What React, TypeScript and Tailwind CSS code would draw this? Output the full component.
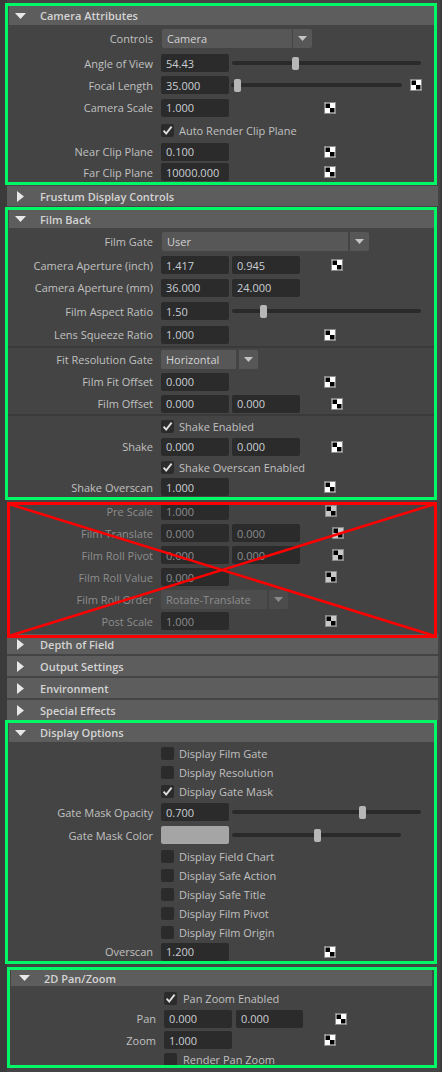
import React from "react";

type Kids = { children?: React.ReactNode };

function Header({
  title,
  open,
  cls,
  tri,
}: {
  title: string;
  open?: boolean;
  cls: string;
  tri: string;
}) {
  return (
    <div className={`flex items-center bg-[#5d5d5d] shrink-0 ${cls}`}>
      <div className={`shrink-0 flex items-center ${tri}`}>
        {open ? (
          <svg width="11" height="6" viewBox="0 0 11 6">
            <polygon points="0,0 11,0 5.5,6" fill="#e8e8e8" />
          </svg>
        ) : (
          <svg width="7" height="11" viewBox="0 0 7 11">
            <polygon points="0,0 7,5.5 0,11" fill="#e8e8e8" />
          </svg>
        )}
      </div>
      <span className="font-semibold text-[11px] text-[#d4d4d4] whitespace-nowrap">{title}</span>
    </div>
  );
}

function Row({
  h,
  label = "",
  lw = "w-[145px]",
  dim,
  extra = "items-center",
  children,
}: Kids & { h: string; label?: string; lw?: string; dim?: boolean; extra?: string }) {
  return (
    <div className={`flex shrink-0 ${extra} ${h}`}>
      <div
        className={`${lw} shrink-0 text-right whitespace-nowrap ${dim ? "text-[#8d8d8d]" : "text-[#c0c0c0]"}`}
      >
        {label}
      </div>
      <div className="ml-[8px] flex items-center">{children}</div>
    </div>
  );
}

function Field({ v, w = "w-[68px]", dim, cls = "" }: { v: string; w?: string; dim?: boolean; cls?: string }) {
  return (
    <div
      className={`${w} h-[18px] shrink-0 rounded-[2px] bg-[#2b2b2b] pl-[5px] flex items-center whitespace-nowrap ${
        dim ? "text-[#8a8c8e]" : "text-[#c9ced4]"
      } ${cls}`}
    >
      {v}
    </div>
  );
}

function Slider({ w, thumb, cls = "" }: { w: string; thumb: number; cls?: string }) {
  return (
    <div className={`relative h-[13px] flex items-center shrink-0 ${w} ${cls}`}>
      <div className="h-[4px] w-full rounded-full bg-[#2a2a2a]" />
      <div className="absolute top-0 h-[13px] w-[7px] rounded-[2px] bg-[#b7b7b7]" style={{ left: thumb }} />
    </div>
  );
}

function Checker({ cls = "", dim }: { cls?: string; dim?: boolean }) {
  return (
    <svg width="12" height="12" viewBox="0 0 12 12" className={`shrink-0 ${cls}`}>
      <rect x="0.5" y="0.5" width="11" height="11" fill={dim ? "#c8c8c8" : "#ffffff"} stroke="#8a8a8a" />
      <rect x="1.5" y="1.5" width="4.5" height="4.5" fill="#000" />
      <rect x="6" y="6" width="4.5" height="4.5" fill="#000" />
    </svg>
  );
}

function Check({ checked, label, gap = "ml-[5px]" }: { checked?: boolean; label: string; gap?: string }) {
  return (
    <div className="flex items-center">
      <div className="w-[13px] h-[13px] shrink-0 rounded-[2px] bg-[#2b2b2b] flex items-center justify-center">
        {checked && (
          <svg width="11" height="11" viewBox="0 0 11 11">
            <path d="M1.6 5.6 L4.2 8.6 L9.6 1.6" stroke="#dedede" strokeWidth="1.9" fill="none" />
          </svg>
        )}
      </div>
      <span className={`${gap} text-[#c0c0c0] whitespace-nowrap`}>{label}</span>
    </div>
  );
}

function Drop({ v, w, gap = "ml-[1px]", cls = "", dim }: { v: string; w: string; gap?: string; cls?: string; dim?: boolean }) {
  return (
    <div className={`flex items-center h-[19px] ${cls}`}>
      <div
        className={`${w} h-full rounded-l-[2px] pl-[5px] flex items-center whitespace-nowrap ${
          dim ? "bg-[#4c4c4c] text-[#8d8d8d]" : "bg-[#575757] text-[#d2d2d2]"
        }`}
      >
        {v}
      </div>
      <div
        className={`${gap} w-[19px] h-full rounded-r-[2px] flex items-center justify-center ${
          dim ? "bg-[#4c4c4c]" : "bg-[#575757]"
        }`}
      >
        <svg width="9" height="5" viewBox="0 0 9 5">
          <polygon points="0,0 9,0 4.5,5" fill={dim ? "#8a8a8a" : "#c4c4c4"} />
        </svg>
      </div>
    </div>
  );
}

function Sep() {
  return <div className="h-[2px] shrink-0 bg-[#3a3a3a]" />;
}

export default function App() {
  return (
    <div className="w-[442px] h-[1072px] bg-[#3b3b3b] overflow-hidden font-['Open_Sans',sans-serif] text-[11px] leading-none">
      <div className="ml-[7px] w-[433px] h-full bg-[#444444] flex flex-col pt-[3px]">
        {/* Camera Attributes */}
        <div className="-ml-[2px] w-[432px] border-[3px] border-[#00f766] flex flex-col shrink-0">
          <Header title="Camera Attributes" open cls="h-[19px] ml-[1px]" tri="w-[31px] pl-[6px]" />
          <Row h="h-[27px]" label="Controls">
            <Drop v="Camera" w="w-[130px]" cls="ml-[1px]" />
          </Row>
          <Row h="h-[22px]" label="Angle of View">
            <Field v="54.43" />
            <Slider w="w-[189px]" thumb={60} cls="ml-[3px]" />
          </Row>
          <Row h="h-[22px]" label="Focal Length">
            <Field v="35.000" />
            <Slider w="w-[171px]" thumb={3} cls="ml-[2px]" />
            <Checker cls="ml-[8px]" />
          </Row>
          <Row h="h-[23px]" label="Camera Scale">
            <Field v="1.000" />
            <Checker cls="ml-[95px]" />
          </Row>
          <Row h="h-[22px]">
            <Check checked label="Auto Render Clip Plane" />
          </Row>
          <Row h="h-[21px]" label="Near Clip Plane">
            <Field v="0.100" />
            <Checker cls="ml-[95px]" />
          </Row>
          <Row h="h-[20px]" label="Far Clip Plane">
            <Field v="10000.000" />
            <Checker cls="ml-[95px]" />
          </Row>
        </div>

        <Header title="Frustum Display Controls" cls="h-[20px] w-[431px] mt-[1px]" tri="w-[33px] pl-[10px]" />

        {/* Film Back */}
        <div className="-ml-[2px] mt-[1px] w-[432px] border-[3px] border-[#00f766] flex flex-col shrink-0">
          <Header title="Film Back" open cls="h-[18px] ml-[1px]" tri="w-[31px] pl-[6px]" />
          <Row h="h-[26px]" label="Film Gate">
            <Drop v="User" w="w-[186px]" gap="ml-[2px]" cls="ml-[1px]" />
          </Row>
          <Row h="h-[22px]" label="Camera Aperture (inch)">
            <Field v="1.417" />
            <Field v="0.945" cls="ml-[3px]" />
            <Checker cls="ml-[31px]" />
          </Row>
          <Row h="h-[23px]" label="Camera Aperture (mm)">
            <Field v="36.000" />
            <Field v="24.000" cls="ml-[3px]" />
          </Row>
          <Row h="h-[24px]" label="Film Aspect Ratio">
            <Field v="1.50" />
            <Slider w="w-[189px]" thumb={28} cls="ml-[3px]" />
          </Row>
          <Row h="h-[23px]" label="Lens Squeeze Ratio">
            <Field v="1.000" />
            <Checker cls="ml-[95px]" />
          </Row>
          <Sep />
          <Row h="h-[22px]" label="Fit Resolution Gate">
            <Drop v="Horizontal" w="w-[75px]" gap="ml-[3px]" />
          </Row>
          <Row h="h-[23px]" label="Film Fit Offset">
            <Field v="0.000" />
            <Checker cls="ml-[95px]" />
          </Row>
          <Row h="h-[21px]" label="Film Offset">
            <Field v="0.000" />
            <Field v="0.000" cls="ml-[3px]" />
            <Checker cls="ml-[31px]" />
          </Row>
          <Sep />
          <Row h="h-[20px]">
            <Check checked label="Shake Enabled" />
          </Row>
          <Row h="h-[21px]" label="Shake">
            <Field v="0.000" />
            <Field v="0.000" cls="ml-[3px]" />
            <Checker cls="ml-[31px]" />
          </Row>
          <Row h="h-[20px]">
            <Check checked label="Shake Overscan Enabled" />
          </Row>
          <Row h="h-[20px]" label="Shake Overscan">
            <Field v="1.000" />
            <Checker cls="ml-[95px]" />
          </Row>
        </div>

        {/* Disabled rows crossed out */}
        <div className="relative w-[430px] flex flex-col shrink-0 pb-[2px] bg-[#434343]">
          <Row h="h-[22px]" label="Pre Scale" lw="w-[146px]" dim>
            <Field v="1.000" dim />
            <Checker cls="ml-[96px]" dim />
          </Row>
          <Row h="h-[22px]" label="Film Translate" lw="w-[146px]" dim>
            <Field v="0.000" dim />
            <Field v="0.000" dim cls="ml-[3px]" />
            <Checker cls="ml-[32px]" dim />
          </Row>
          <Row h="h-[22px]" label="Film Roll Pivot" lw="w-[146px]" dim>
            <Field v="0.000" dim />
            <Field v="0.000" dim cls="ml-[3px]" />
            <Checker cls="ml-[32px]" dim />
          </Row>
          <Row h="h-[22px]" label="Film Roll Value" lw="w-[146px]" dim>
            <Field v="0.000" dim />
            <Checker cls="ml-[96px]" dim />
          </Row>
          <Row h="h-[22px]" label="Film Roll Order" lw="w-[146px]" dim>
            <Drop v="Rotate-Translate" w="w-[106px]" gap="ml-[2px]" dim />
          </Row>
          <Row h="h-[22px]" label="Post Scale" lw="w-[146px]" dim>
            <Field v="1.000" dim />
            <Checker cls="ml-[96px]" dim />
          </Row>
          <svg
            className="absolute left-0 top-[2px] z-10 pointer-events-none"
            width="430"
            height="136"
            viewBox="0 0 430 136"
          >
            <rect x="1.5" y="1.5" width="427" height="133" fill="none" stroke="#ff0000" strokeWidth="3" />
            <line x1="2" y1="2" x2="428" y2="134" stroke="#ff0000" strokeWidth="2.5" />
            <line x1="428" y1="2" x2="2" y2="134" stroke="#ff0000" strokeWidth="2.5" />
          </svg>
        </div>

        <Header title="Depth of Field" cls="h-[20px] w-[431px]" tri="w-[33px] pl-[10px]" />
        <Header title="Output Settings" cls="h-[20px] w-[431px] mt-[2px]" tri="w-[33px] pl-[10px]" />
        <Header title="Environment" cls="h-[20px] w-[431px] mt-[2px]" tri="w-[33px] pl-[10px]" />
        <Header title="Special Effects" cls="h-[20px] w-[431px] mt-[2px]" tri="w-[33px] pl-[10px]" />

        {/* Display Options */}
        <div className="-ml-[2px] w-[432px] border-[3px] border-[#00f766] flex flex-col shrink-0">
          <Header title="Display Options" open cls="h-[19px] ml-[1px]" tri="w-[31px] pl-[6px]" />
          <div className="h-[2px] shrink-0" />
          <Row h="h-[19px]">
            <Check label="Display Film Gate" />
          </Row>
          <Row h="h-[19px]">
            <Check label="Display Resolution" />
          </Row>
          <Row h="h-[19px]">
            <Check checked label="Display Gate Mask" />
          </Row>
          <Row h="h-[22px]" label="Gate Mask Opacity">
            <Field v="0.700" />
            <Slider w="w-[189px]" thumb={127} cls="ml-[3px]" />
          </Row>
          <Row h="h-[24px]" label="Gate Mask Color">
            <div className="w-[68px] h-[18px] rounded-[2px] bg-[#a5a5a5]" />
            <Slider w="w-[169px]" thumb={82} cls="ml-[3px]" />
          </Row>
          <Row h="h-[19px]">
            <Check label="Display Field Chart" />
          </Row>
          <Row h="h-[19px]">
            <Check label="Display Safe Action" />
          </Row>
          <Row h="h-[19px]">
            <Check label="Display Safe Title" />
          </Row>
          <Row h="h-[19px]">
            <Check label="Display Film Pivot" />
          </Row>
          <Row h="h-[19px]">
            <Check label="Display Film Origin" />
          </Row>
          <Row h="h-[19px]" label="Overscan">
            <Field v="1.200" />
            <Checker cls="ml-[95px]" />
          </Row>
        </div>

        {/* 2D Pan/Zoom */}
        <div className="mt-[3px] w-[430px] border-[3px] border-[#00f766] flex flex-col shrink-0">
          <Header title="2D Pan/Zoom" open cls="h-[16px] ml-[1px] mr-[2px]" tri="w-[33px] pl-[8px]" />
          <div className="h-[2px] shrink-0" />
          <Row h="h-[20px]" lw="w-[146px]">
            <Check checked label="Pan Zoom Enabled" gap="ml-[6px]" />
          </Row>
          <Row h="h-[21px]" label="Pan" lw="w-[146px]">
            <Field v="0.000" />
            <Field v="0.000" w="w-[67px]" cls="ml-[4px]" />
            <Checker cls="ml-[32px]" />
          </Row>
          <Row h="h-[22px]" label="Zoom" lw="w-[146px]">
            <Field v="1.000" />
            <Checker cls="ml-[92px]" />
          </Row>
          <Row h="h-[14px] overflow-hidden" lw="w-[146px]" extra="items-start pt-[2px]">
            <Check label="Render Pan Zoom" gap="ml-[6px]" />
          </Row>
        </div>
      </div>
    </div>
  );
}
